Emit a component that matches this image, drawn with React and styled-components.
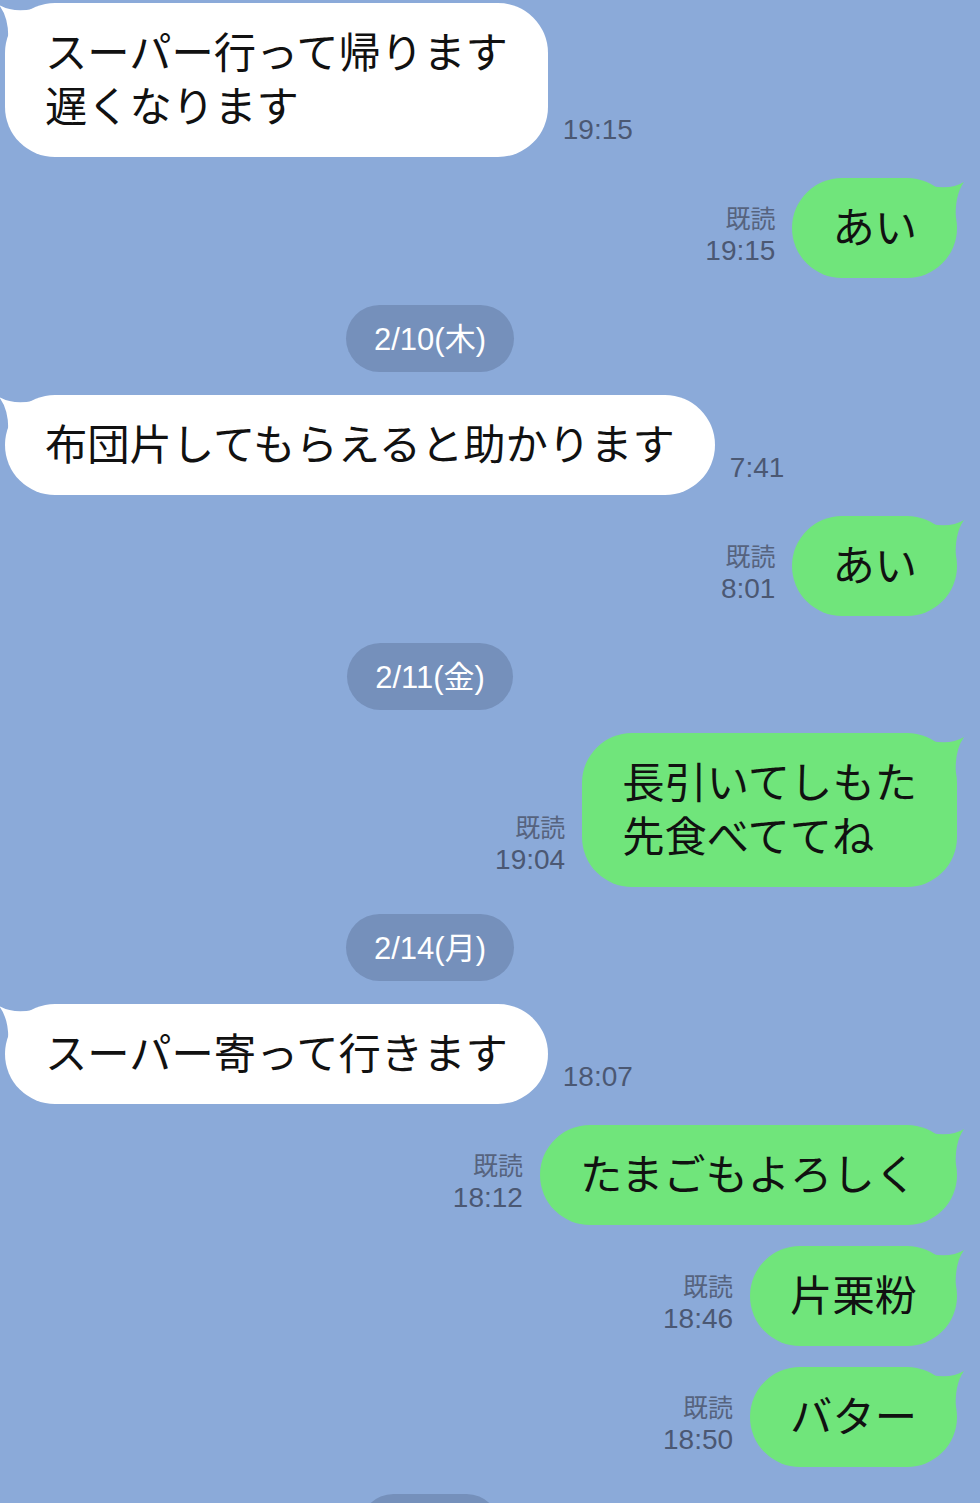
import React from "react";
import styled, { createGlobalStyle } from "styled-components";

const GlobalStyle = createGlobalStyle`
  html, body {
    margin: 0;
    padding: 0;
    background: #8BAAD9;
    overflow: hidden;
  }
  body {
    font-family: "Noto Sans CJK JP", "Noto Sans", sans-serif;
  }
`;

const Chat = styled.main`
  display: flex;
  flex-direction: column;
  gap: 21px;
  padding: 3px 0 0;
  height: 1503px;
  overflow: hidden;
  box-sizing: border-box;
  background: #8BAAD9;
`;

const Row = styled.div`
  display: flex;
  align-items: flex-end;
  justify-content: ${(p) => (p.$out ? "flex-end" : "flex-start")};
  gap: ${(p) => (p.$out ? "17px" : "15px")};
  padding: ${(p) => (p.$out ? "0 23px 0 0" : "0 0 0 5px")};
`;

const Bubble = styled.div`
  position: relative;
  background: ${(p) => (p.$out ? "#70E57B" : "#FFFFFF")};
  color: #111111;
  border-radius: 50px;
  padding: 20px 40px 26px;
  font-family: "Noto Sans CJK JP", sans-serif;
  font-size: 42.3px;
  line-height: 54px;
  white-space: pre;
`;

const TailSvg = styled.svg`
  position: absolute;
  top: ${(p) => (p.$out ? "0" : "-2px")};
  ${(p) => (p.$out ? "right: -8px;" : "left: -6px;")}
  width: 34px;
  height: 44px;
  overflow: visible;
`;

const Meta = styled.div`
  display: flex;
  flex-direction: column;
  align-items: ${(p) => (p.$out ? "flex-end" : "flex-start")};
  margin-bottom: 11px;
`;

const Read = styled.span`
  font-family: "Noto Sans CJK JP", sans-serif;
  font-size: 25px;
  line-height: 28px;
  color: #56637e;
  margin-bottom: 4px;
`;

const Time = styled.span`
  font-family: "Liberation Sans", "Noto Sans", sans-serif;
  font-size: 28px;
  line-height: 32px;
  color: #4b5873;
`;

const DateRow = styled.div`
  display: flex;
  justify-content: center;
  padding-right: 120px;
  margin: 6px 0 2px;
`;

const DatePill = styled.div`
  height: 67px;
  min-width: 140px;
  box-sizing: border-box;
  border-radius: 34px;
  background: #7590BB;
  color: #ffffff;
  padding: 0 28px 5px;
  display: flex;
  align-items: center;
  justify-content: center;
  font-family: "Liberation Sans", "Noto Sans CJK JP", sans-serif;
  font-size: 31px;
`;

function Tail({ out }) {
  return out ? (
    <TailSvg $out viewBox="0 0 34 44" aria-hidden="true">
      <path d="M33,4 Q20,12 0,8 L0,44 L25,44 Q23,18 33,4 Z" fill="#70E57B" />
    </TailSvg>
  ) : (
    <TailSvg viewBox="0 0 34 44" aria-hidden="true">
      <path d="M0,4 Q14,12 34,8 L34,44 L9,44 Q11,18 0,4 Z" fill="#FFFFFF" />
    </TailSvg>
  );
}

const items = [
  { type: "in", text: "スーパー行って帰ります\n遅くなります", time: "19:15" },
  { type: "out", text: "あい", time: "19:15" },
  { type: "date", label: "2/10(木)" },
  { type: "in", text: "布団片してもらえると助かります", time: "7:41" },
  { type: "out", text: "あい", time: "8:01" },
  { type: "date", label: "2/11(金)" },
  { type: "out", text: "長引いてしもた\n先食べててね", time: "19:04" },
  { type: "date", label: "2/14(月)" },
  { type: "in", text: "スーパー寄って行きます", time: "18:07" },
  { type: "out", text: "たまごもよろしく", time: "18:12" },
  { type: "out", text: "片栗粉", time: "18:46" },
  { type: "out", text: "バター", time: "18:50" },
  { type: "date", label: "" },
];

export default function App() {
  return (
    <>
      <GlobalStyle />
      <Chat>
        {items.map((it, i) => {
          if (it.type === "date") {
            return (
              <DateRow key={i}>
                <DatePill>{it.label}</DatePill>
              </DateRow>
            );
          }
          const out = it.type === "out";
          const meta = (
            <Meta $out={out}>
              {out && <Read>既読</Read>}
              <Time>{it.time}</Time>
            </Meta>
          );
          return (
            <Row key={i} $out={out}>
              {out && meta}
              <Bubble $out={out}>
                <Tail out={out} />
                {it.text}
              </Bubble>
              {!out && meta}
            </Row>
          );
        })}
      </Chat>
    </>
  );
}
